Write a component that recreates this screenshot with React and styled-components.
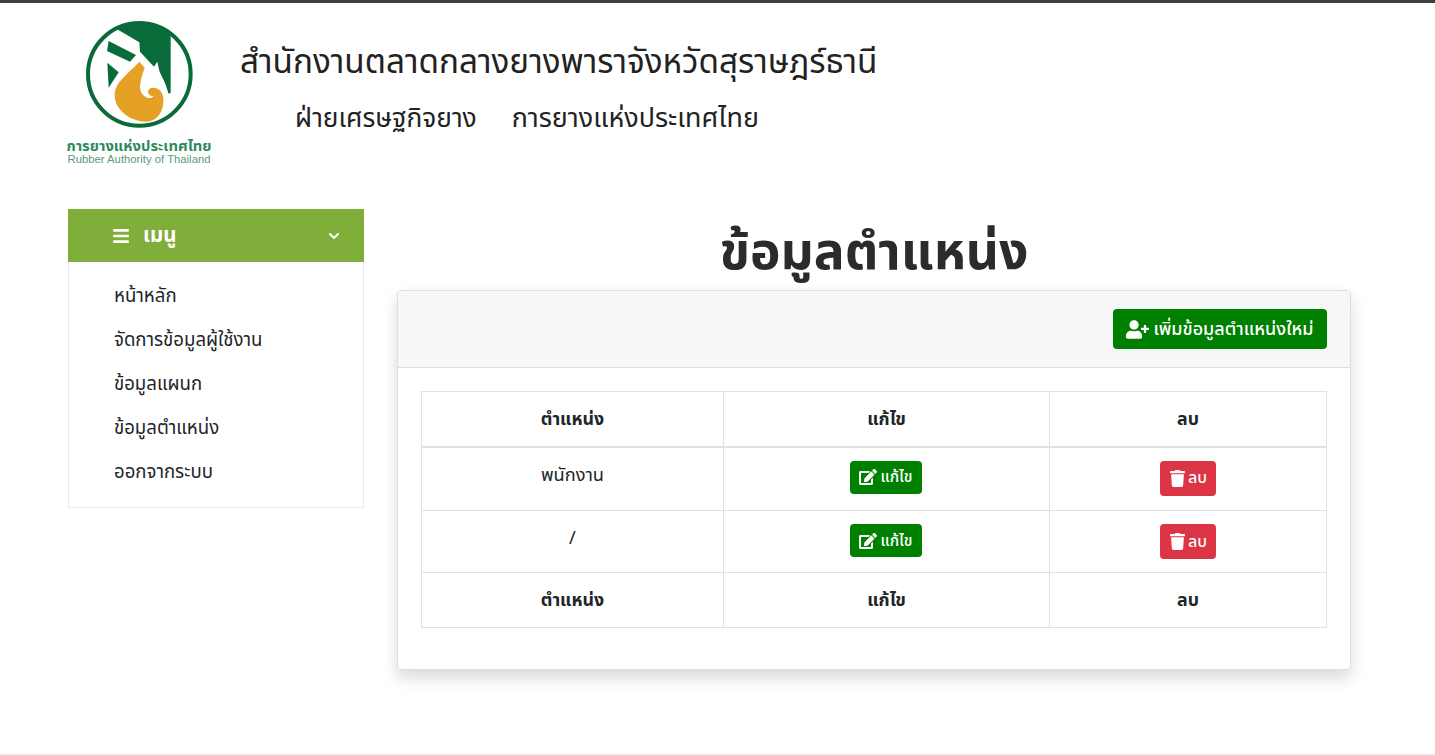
import React from "react";
import styled, { createGlobalStyle } from "styled-components";
import { FaBars, FaEdit, FaTrash, FaUserPlus } from "react-icons/fa";
import { FiChevronDown } from "react-icons/fi";

const FONT = `"Noto Sans", "Noto Sans Thai", "Open Sans", sans-serif`;

const Global = createGlobalStyle`
  html, body { margin: 0; padding: 0; background: #fff; }
  body { font-family: ${FONT}; color: #212529; }
  * { box-sizing: border-box; }
`;

const Page = styled.div`
  height: 755px;
  overflow: hidden;
  border-top: 3px solid #3c4043;
  display: flex;
  flex-direction: column;
`;

const Header = styled.header`
  height: 172px;
  padding: 12px 0 0 66px;
  display: flex;
  gap: 28px;
`;

const LogoBlock = styled.div`
  width: 146px;
  display: flex;
  flex-direction: column;
  align-items: center;
`;

const LogoThai = styled.div`
  font-size: 14.8px;
  font-weight: 700;
  line-height: 16px;
  color: #2f8a5c;
  white-space: nowrap;
  margin-top: 4px;
`;

const LogoEng = styled.div`
  font-size: 11.3px;
  line-height: 12px;
  color: #5c9a78;
  white-space: nowrap;
  font-family: "Liberation Sans", sans-serif;
`;

const Titles = styled.div`
  display: flex;
  flex-direction: column;
  padding-top: 24px;
  color: #222;
`;

const OrgName = styled.div`
  font-size: 33.3px;
  line-height: 42px;
  white-space: nowrap;
`;

const SubRow = styled.div`
  display: flex;
  gap: 35px;
  line-height: 34px;
  margin: 19px 0 0 55px;
  white-space: nowrap;
`;

const SubText = styled.span`
  font-size: ${(p) => p.$size}px;
`;

const Body = styled.div`
  flex: 1;
  display: flex;
  align-items: flex-start;
  gap: 33px;
  padding: 34px 0 0 68px;
`;

const Sidebar = styled.aside`
  width: 296px;
  flex: none;
`;

const MenuHead = styled.div`
  height: 53px;
  background: #80ae3a;
  color: #fff;
  display: flex;
  align-items: center;
  padding: 0 22px 0 44px;
  font-size: 20.5px;
  font-weight: 700;
  gap: 13px;
`;

const MenuTitle = styled.span`
  flex: 1;
`;

const MenuList = styled.nav`
  border: 1px solid #eaeaea;
  border-top: 0;
  padding: 12px 0 13px 45px;
  display: flex;
  flex-direction: column;
`;

const MenuItem = styled.a`
  height: 44px;
  display: flex;
  align-items: center;
  font-size: 18.6px;
  color: #212529;
`;

const Main = styled.main`
  width: 954px;
  flex: none;
`;

const PageTitle = styled.h1`
  margin: 0;
  height: 81px;
  text-align: center;
  font-size: 51.5px;
  line-height: 81px;
  font-weight: 700;
  color: #2b2b2b;
`;

const Card = styled.section`
  height: 380px;
  border: 1px solid #dfdfdf;
  border-radius: 4px;
  background: #fff;
  box-shadow: 0 8px 16px rgba(0, 0, 0, 0.15);
  overflow: hidden;
`;

const CardHead = styled.div`
  height: 77px;
  background: #f7f7f7;
  border-bottom: 1px solid #dfdfdf;
  display: flex;
  justify-content: flex-end;
  align-items: center;
  padding: 0 23px 0 0;
`;

const Button = styled.button`
  display: inline-flex;
  align-items: center;
  justify-content: center;
  vertical-align: top;
  gap: ${(p) => p.$gap ?? 4}px;
  height: ${(p) => p.$h}px;
  width: ${(p) => p.$w}px;
  border: 0;
  border-radius: 4px;
  padding: 0;
  color: #fff;
  background: ${(p) => (p.$danger ? "#dc3545" : "#008000")};
  font-family: ${FONT};
  font-size: ${(p) => p.$size}px;
  font-weight: 500;
`;

const CardBody = styled.div`
  padding: 23px;
`;

const Table = styled.table`
  width: 905px;
  border-collapse: collapse;
  table-layout: fixed;
  font-size: 17.8px;
  color: #212529;
`;

const Th = styled.th`
  border: 1px solid #dee2e6;
  border-bottom-width: ${(p) => (p.$foot ? 1 : 2)}px;
  height: 55px;
  font-weight: 700;
  text-align: center;
  padding: 1px 0 0;
`;

const Td = styled.td`
  border: 1px solid #dee2e6;
  height: ${(p) => p.$h}px;
  text-align: center;
  vertical-align: top;
  padding: 13px ${(p) => p.$right || 0}px 0 0;
  line-height: 27px;
  font-size: 18.2px;
`;

const Line = styled.div`
  margin-top: auto;
  height: 2px;
  background: #f3f6f9;
`;

function Logo() {
  return (
    <svg width="118" height="118" viewBox="0 0 354 354">
      <circle cx="178" cy="178" r="154" fill="#fff" stroke="#0a6b3a" strokeWidth="12" />
      <path d="M110 42 A150 150 0 0 1 272 61 L272 235 L265 235 C258 205 245 185 238 168 L232 140 L222 155 L180 110 L178 82 Z" fill="#0a6b3a" />
      <path d="M86 78 L168 120 L150 140 L81 108 Z" fill="#0a6b3a" />
      <path d="M82 143 L116 172 L86 218 Z" fill="#0a6b3a" />
      <path d="M178 140 C150 172 104 200 104 240 C104 285 150 318 195 320 C235 322 252 285 250 250 C248 225 225 212 208 222 C200 228 205 245 220 243 C215 255 190 250 182 228 C176 205 190 170 194 158 Z" fill="#e5a126" />
    </svg>
  );
}

const rows = [
  { name: "พนักงาน", h: 64 },
  { name: "/", h: 62 },
];

export default function App() {
  return (
    <Page>
      <Global />
      <Header>
        <LogoBlock>
          <Logo />
          <LogoThai>การยางแห่งประเทศไทย</LogoThai>
          <LogoEng>Rubber Authority of Thailand</LogoEng>
        </LogoBlock>
        <Titles>
          <OrgName>สำนักงานตลาดกลางยางพาราจังหวัดสุราษฎร์ธานี</OrgName>
          <SubRow>
            <SubText $size={26.3}>ฝ่ายเศรษฐกิจยาง</SubText>
            <SubText $size={26.9}>การยางแห่งประเทศไทย</SubText>
          </SubRow>
        </Titles>
      </Header>
      <Body>
        <Sidebar>
          <MenuHead>
            <FaBars size={18} />
            <MenuTitle>เมนู</MenuTitle>
            <FiChevronDown size={16} strokeWidth={3} />
          </MenuHead>
          <MenuList>
            {["หน้าหลัก", "จัดการข้อมูลผู้ใช้งาน", "ข้อมูลแผนก", "ข้อมูลตำแหน่ง", "ออกจากระบบ"].map((t) => (
              <MenuItem key={t}>{t}</MenuItem>
            ))}
          </MenuList>
        </Sidebar>
        <Main>
          <PageTitle>ข้อมูลตำแหน่ง</PageTitle>
          <Card>
            <CardHead>
              <Button $w={214} $h={40} $size={18}>
                <FaUserPlus size={23} />
                เพิ่มข้อมูลตำแหน่งใหม่
              </Button>
            </CardHead>
            <CardBody>
              <Table>
                <colgroup>
                  <col style={{ width: 302 }} />
                  <col style={{ width: 326 }} />
                  <col style={{ width: 277 }} />
                </colgroup>
                <thead>
                  <tr>
                    <Th>ตำแหน่ง</Th>
                    <Th>แก้ไข</Th>
                    <Th>ลบ</Th>
                  </tr>
                </thead>
                <tbody>
                  {rows.map((r) => (
                    <tr key={r.name}>
                      <Td $h={r.h}>{r.name}</Td>
                      <Td $h={r.h} $right={2}>
                        <Button $w={72} $h={33} $size={15.5}>
                          <FaEdit size={18} />
                          แก้ไข
                        </Button>
                      </Td>
                      <Td $h={r.h}>
                        <Button $w={56} $h={35} $size={16} $gap={2} $danger>
                          <FaTrash size={17} />
                          ลบ
                        </Button>
                      </Td>
                    </tr>
                  ))}
                </tbody>
                <tfoot>
                  <tr>
                    <Th $foot>ตำแหน่ง</Th>
                    <Th $foot>แก้ไข</Th>
                    <Th $foot>ลบ</Th>
                  </tr>
                </tfoot>
              </Table>
            </CardBody>
          </Card>
        </Main>
      </Body>
      <Line />
    </Page>
  );
}
